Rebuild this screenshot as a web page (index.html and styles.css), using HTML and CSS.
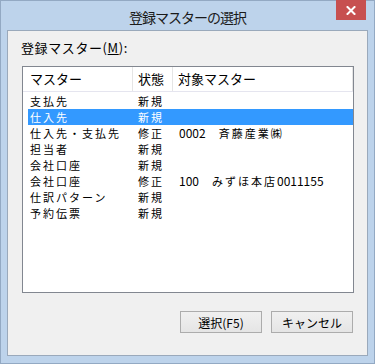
FILE: index.html
```html
<!DOCTYPE html>
<html lang="ja">
  <head>
    <meta charset="UTF-8" />
    <title>登録マスターの選択</title>
    <link rel="stylesheet" href="styles.css">
  </head>
  <body>
    <div class="window">
      <div class="titlebar">
        <span></span>
        <span class="title">登録マスターの選択</span>
        <button class="close" title="閉じる">
          <svg width="10" height="9" viewBox="0 0 10 9">
            <path d="M1.5 1 L8.5 8 M8.5 1 L1.5 8" stroke="#fff" stroke-width="2" stroke-linecap="square" />
          </svg>
        </button>
      </div>

      <div class="client">
        <div class="label">登録マスター(<u>M</u>):</div>

        <div class="listbox">
          <div class="head">
            <div class="hcell">マスター</div>
            <div class="hcell">状態</div>
            <div class="hcell">対象マスター</div>
          </div>
          <div class="rows">
            <div class="row"><span>支払先</span><span>新規</span><span></span></div>
            <div class="row selected"><span>仕入先</span><span>新規</span><span></span></div>
            <div class="row"><span>仕入先・支払先</span><span>修正</span><span><span class="num">0002</span>　斉藤産業㈱</span></div>
            <div class="row"><span>担当者</span><span>新規</span><span></span></div>
            <div class="row"><span>会社口座</span><span>新規</span><span></span></div>
            <div class="row"><span>会社口座</span><span>修正</span><span><span class="num">100</span>　みずほ本店<span class="num">0011155</span></span></div>
            <div class="row"><span>仕訳パターン</span><span>新規</span><span></span></div>
            <div class="row"><span>予約伝票</span><span>新規</span><span></span></div>
          </div>
        </div>

        <div class="buttons">
          <button class="btn">選択(F5)</button>
          <button class="btn">キャンセル</button>
        </div>
      </div>
    </div>
  </body>
</html>
```

FILE: styles.css
```css
html,
body {
  margin: 0;
  padding: 0;
}

body {
  width: 375px;
  height: 364px;
  font-family: "Noto Sans CJK JP", sans-serif;
  font-size: 13px;
  color: #000;
}

.window {
  width: 375px;
  height: 364px;
  box-sizing: border-box;
  background-color: #bdd3eb;
  border: 1px solid #93a9c3;
  padding: 0 6px 7px 6px;
  display: flex;
  flex-direction: column;
}

.titlebar {
  height: 29px;
  display: grid;
  grid-template-columns: 1fr auto 1fr;
  align-items: start;
  margin: 0 -6px;
}

.title {
  font-size: 14px;
  letter-spacing: -1px;
  line-height: 18px;
  margin-top: 7px;
  color: #1a1a1a;
}

.close {
  justify-self: end;
  width: 30px;
  height: 20px;
  margin-top: -1px;
  margin-right: 8px;
  border: none;
  padding: 0;
  background-color: #c75050;
  display: flex;
  align-items: center;
  justify-content: center;
}

.client {
  flex: 1;
  background-color: #f0f0f0;
  border: 1px solid #9aa9bb;
  padding: 0 13px 0 13px;
  display: flex;
  flex-direction: column;
}

.label {
  line-height: 16px;
  margin-top: 9px;
  letter-spacing: 0.6px;
}

.label u {
  text-underline-offset: 1px;
}

.listbox {
  margin-top: 10px;
  margin-left: 1px;
  height: 227px;
  box-sizing: border-box;
  background-color: #fff;
  border: 1px solid #828790;
}

.head {
  display: grid;
  grid-template-columns: 110px 40px 1fr;
  height: 24px;
  border-bottom: 1px solid #e5e5ef;
}

.hcell {
  line-height: 24px;
  padding-left: 5px;
  border-right: 1px solid #e5e5e5;
}

.hcell:first-child {
  padding-left: 7px;
}

.rows {
  padding-top: 1px;
}

.row {
  display: grid;
  grid-template-columns: 110px 39px 1fr;
  margin-left: 5px;
  height: 16px;
  line-height: 16px;
  font-size: 11px;
  letter-spacing: 2px;
  white-space: nowrap;
}

.row span:first-child {
  padding-left: 2px;
}

.row .num {
  font-size: 12px;
  letter-spacing: 0;
}

.row.selected {
  background-color: #3399ff;
  color: #fff;
}

.buttons {
  display: flex;
  justify-content: flex-end;
  gap: 9px;
  margin-top: 18px;
  padding-right: 1px;
}

.btn {
  width: 82px;
  height: 22px;
  font-family: "Noto Sans CJK JP", sans-serif;
  font-size: 12px;
  color: #000;
  background: linear-gradient(#f0f0f0, #e5e5e5);
  border: 1px solid #acacac;
  padding: 0;
}
```
